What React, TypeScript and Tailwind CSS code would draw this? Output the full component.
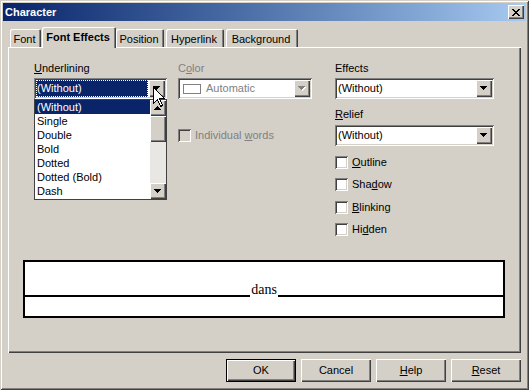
import React from "react";

const raised = "shadow-[inset_1px_1px_#ffffff,inset_-1px_-1px_#404040,inset_-2px_-2px_#808080]";
const sunken = "shadow-[inset_1px_1px_#808080,inset_-1px_-1px_#ffffff,inset_2px_2px_#404040,inset_-2px_-2px_#d4d0c8]";

function Arrow({ disabled, up }: { disabled?: boolean; up?: boolean }) {
  const rows = [
    { x: 0, w: 7 },
    { x: 1, w: 5 },
    { x: 2, w: 3 },
    { x: 3, w: 1 },
  ];
  const ys = up ? [3, 2, 1, 0] : [0, 1, 2, 3];
  return (
    <svg width="8" height="5" viewBox="0 0 8 5" shapeRendering="crispEdges">
      {disabled &&
        rows.map((r, i) => (
          <rect key={"s" + i} x={r.x + 1} y={ys[i] + 1} width={r.w} height={1} fill="#ffffff" />
        ))}
      {rows.map((r, i) => (
        <rect key={i} x={r.x} y={ys[i]} width={r.w} height={1} fill={disabled ? "#808080" : "#000000"} />
      ))}
    </svg>
  );
}

function Combo({
  children,
  focused,
  disabled,
}: {
  children: React.ReactNode;
  focused?: boolean;
  disabled?: boolean;
}) {
  return (
    <div className={`flex h-[21px] bg-white p-[2px] ${sunken}`}>
      <div className="flex-1 flex items-center min-w-0">
        {focused ? (
          <div className="h-full w-full bg-[#0a246a] border border-dotted border-[#ffffff] text-white flex items-center pl-[0px] mr-[1px]">
            {children}
          </div>
        ) : (
          <div className={`flex items-center pl-[1px] ${disabled ? "text-[#808080]" : "text-black"}`}>{children}</div>
        )}
      </div>
      <div className={`w-[16px] h-full flex items-center justify-center bg-[#d4d0c8] ${raised}`}>
        <Arrow disabled={disabled} />
      </div>
    </div>
  );
}

function Check({ label, disabled }: { label: React.ReactNode; disabled?: boolean }) {
  return (
    <div className="flex items-center h-[13px]">
      <div className={`w-[13px] h-[13px] ${disabled ? "bg-[#d4d0c8]" : "bg-white"} ${sunken}`} />
      <span className={`ml-[4px] leading-[13px] ${disabled ? "text-[#808080]" : "text-black"}`}>{label}</span>
    </div>
  );
}

function Label({ children, disabled }: { children: React.ReactNode; disabled?: boolean }) {
  return (
    <div className={`h-[14px] leading-[14px] ${disabled ? "text-[#808080]" : "text-black"}`}>{children}</div>
  );
}

function Tab({ label, w, selected }: { label: string; w: number; selected?: boolean }) {
  if (selected) {
    return (
      <div
        style={{ width: w }}
        className="relative z-10 h-[21px] -mb-[1px] bg-[#d4d0c8] rounded-t-[2px] shadow-[inset_1px_1px_#ffffff,inset_-1px_0_#404040,inset_-2px_0_#808080] flex justify-center pr-[2px] pt-[3px] font-bold leading-[14px]"
      >
        {label}
      </div>
    );
  }
  return (
    <div
      style={{ width: w }}
      className="h-[18px] bg-[#d4d0c8] rounded-t-[2px] shadow-[inset_1px_1px_#ffffff,inset_-1px_0_#404040,inset_-2px_0_#808080] flex justify-center pr-[2px] pt-[3px] leading-[14px]"
    >
      {label}
    </div>
  );
}

function Button({ children, def }: { children: React.ReactNode; def?: boolean }) {
  if (def) {
    return (
      <div className="w-[70px] h-[23px] border border-black">
        <div className={`w-full h-full flex items-center justify-center ${raised}`}>{children}</div>
      </div>
    );
  }
  return <div className={`w-[70px] h-[23px] flex items-center justify-center ${raised}`}>{children}</div>;
}

const items = ["(Without)", "Single", "Double", "Bold", "Dotted", "Dotted (Bold)", "Dash"];

export default function App() {
  return (
    <div className="w-[529px] h-[390px] bg-[#d4d0c8] p-[3px] flex flex-col font-['Liberation_Sans',Arial,sans-serif] text-[11px] text-black shadow-[inset_1px_1px_#d4d0c8,inset_-1px_-1px_#404040,inset_2px_2px_#ffffff,inset_-2px_-2px_#808080]">
      {/* Title bar */}
      <div className="h-[18px] flex items-center justify-between bg-linear-to-r from-[#0a246a] to-[#a6caf0]">
        <span className="pl-[2px] text-white font-bold leading-[14px]">Character</span>
        <div className={`mr-[2px] w-[16px] h-[14px] bg-[#d4d0c8] flex items-center justify-center ${raised}`}>
          <svg width="8" height="7" viewBox="0 0 8 7" shapeRendering="crispEdges">
            <path d="M0 0h2v1h-2zM6 0h2v1h-2zM1 1h2v1h-2zM5 1h2v1h-2zM2 2h4v1h-4zM3 3h2v1h-2zM2 4h4v1h-4zM1 5h2v1h-2zM5 5h2v1h-2zM0 6h2v1h-2zM6 6h2v1h-2z" fill="#000" />
          </svg>
        </div>
      </div>

      {/* Tabs */}
      <div className="mt-[6px] pl-[7px] h-[20px] flex items-end">
        <Tab label="Font" w={31} />
        <div className="w-[1px]" />
        <Tab label="Font Effects" w={74} selected />
        <Tab label="Position" w={48} />
        <div className="w-[2px]" />
        <Tab label="Hyperlink" w={58} />
        <div className="w-[2px]" />
        <Tab label="Background" w={72} />
      </div>

      {/* Panel */}
      <div className={`mx-[5px] h-[306px] flex flex-col pt-[14px] ${raised}`}>
        <div className="flex pl-[26px]">
          {/* Left column */}
          <div className="relative w-[133px] flex flex-col">
            <Label>
              <u>U</u>nderlining
            </Label>
            <div className="mt-[3px]">
              <Combo focused>(Without)</Combo>
            </div>
            <div className="h-[101px] border border-[#404040] bg-white flex">
              <div className="flex-1 flex flex-col">
                {items.map((it, i) => (
                  <div
                    key={it}
                    className={`h-[14px] leading-[14px] pl-[2px] ${i === 0 ? "bg-[#0a246a] text-white" : "text-black"}`}
                  >
                    {it}
                  </div>
                ))}
              </div>
              <div className="w-[16px] flex flex-col bg-[#e9e7e3]">
                <div className={`h-[16px] bg-[#d4d0c8] flex items-center justify-center ${raised}`}>
                  <Arrow up />
                </div>
                <div className={`h-[26px] bg-[#d4d0c8] ${raised}`} />
                <div className="flex-1" />
                <div className={`h-[16px] bg-[#d4d0c8] flex items-center justify-center ${raised}`}>
                  <Arrow />
                </div>
              </div>
            </div>
            {/* mouse cursor */}
            <svg
              className="absolute left-[119px] top-[26px]"
              width="13"
              height="21"
              viewBox="0 0 13 21"
              shapeRendering="crispEdges"
            >
              <polygon
                points="0.5,0.5 0.5,16.5 4.5,12.5 7.5,19.5 9.5,18.5 6.5,11.5 11.5,11.5"
                fill="#ffffff"
                stroke="#000000"
                strokeWidth="1"
              />
            </svg>
          </div>

          {/* Middle column */}
          <div className="ml-[11px] w-[134px] flex flex-col">
            <Label disabled>
              C<u>o</u>lor
            </Label>
            <div className="mt-[3px]">
              <Combo disabled>
                <div className="ml-[2px] w-[18px] h-[10px] border border-[#808080] bg-white" />
                <span className="ml-[5px]">Automatic</span>
              </Combo>
            </div>
            <div className="mt-[30px]">
              <Check
                disabled
                label={
                  <>
                    Individual <u>w</u>ords
                  </>
                }
              />
            </div>
          </div>

          {/* Right column */}
          <div className="ml-[23px] w-[159px] flex flex-col">
            <Label>Effects</Label>
            <div className="mt-[3px]">
              <Combo>(Without)</Combo>
            </div>
            <div className="mt-[8px]">
              <Label>
                <u>R</u>elief
              </Label>
            </div>
            <div className="mt-[4px]">
              <Combo>(Without)</Combo>
            </div>
            <div className="mt-[10px]">
              <Check
                label={
                  <>
                    <u>O</u>utline
                  </>
                }
              />
            </div>
            <div className="mt-[9px]">
              <Check
                label={
                  <>
                    Sha<u>d</u>ow
                  </>
                }
              />
            </div>
            <div className="mt-[10px]">
              <Check
                label={
                  <>
                    <u>B</u>linking
                  </>
                }
              />
            </div>
            <div className="mt-[9px]">
              <Check
                label={
                  <>
                    Hi<u>d</u>den
                  </>
                }
              />
            </div>
          </div>
        </div>

        {/* Preview */}
        <div className="ml-[15px] mt-[24px] w-[482px] h-[58px] border-2 border-black bg-white flex flex-col">
          <div className="h-[35px] flex items-end">
            <div className="flex-1 h-[2px] bg-black" />
            <span className="font-['Liberation_Serif','Times_New_Roman',serif] text-[14px] leading-[14px] px-[1px]">
              dans
            </span>
            <div className="flex-1 h-[2px] bg-black" />
          </div>
        </div>
      </div>

      {/* Buttons */}
      <div className="mt-[6px] h-[23px] flex justify-end gap-[5px] pr-[5px]">
        <Button def>OK</Button>
        <Button>Cancel</Button>
        <Button>
          <u>H</u>elp
        </Button>
        <Button>
          <u>R</u>eset
        </Button>
      </div>
    </div>
  );
}
